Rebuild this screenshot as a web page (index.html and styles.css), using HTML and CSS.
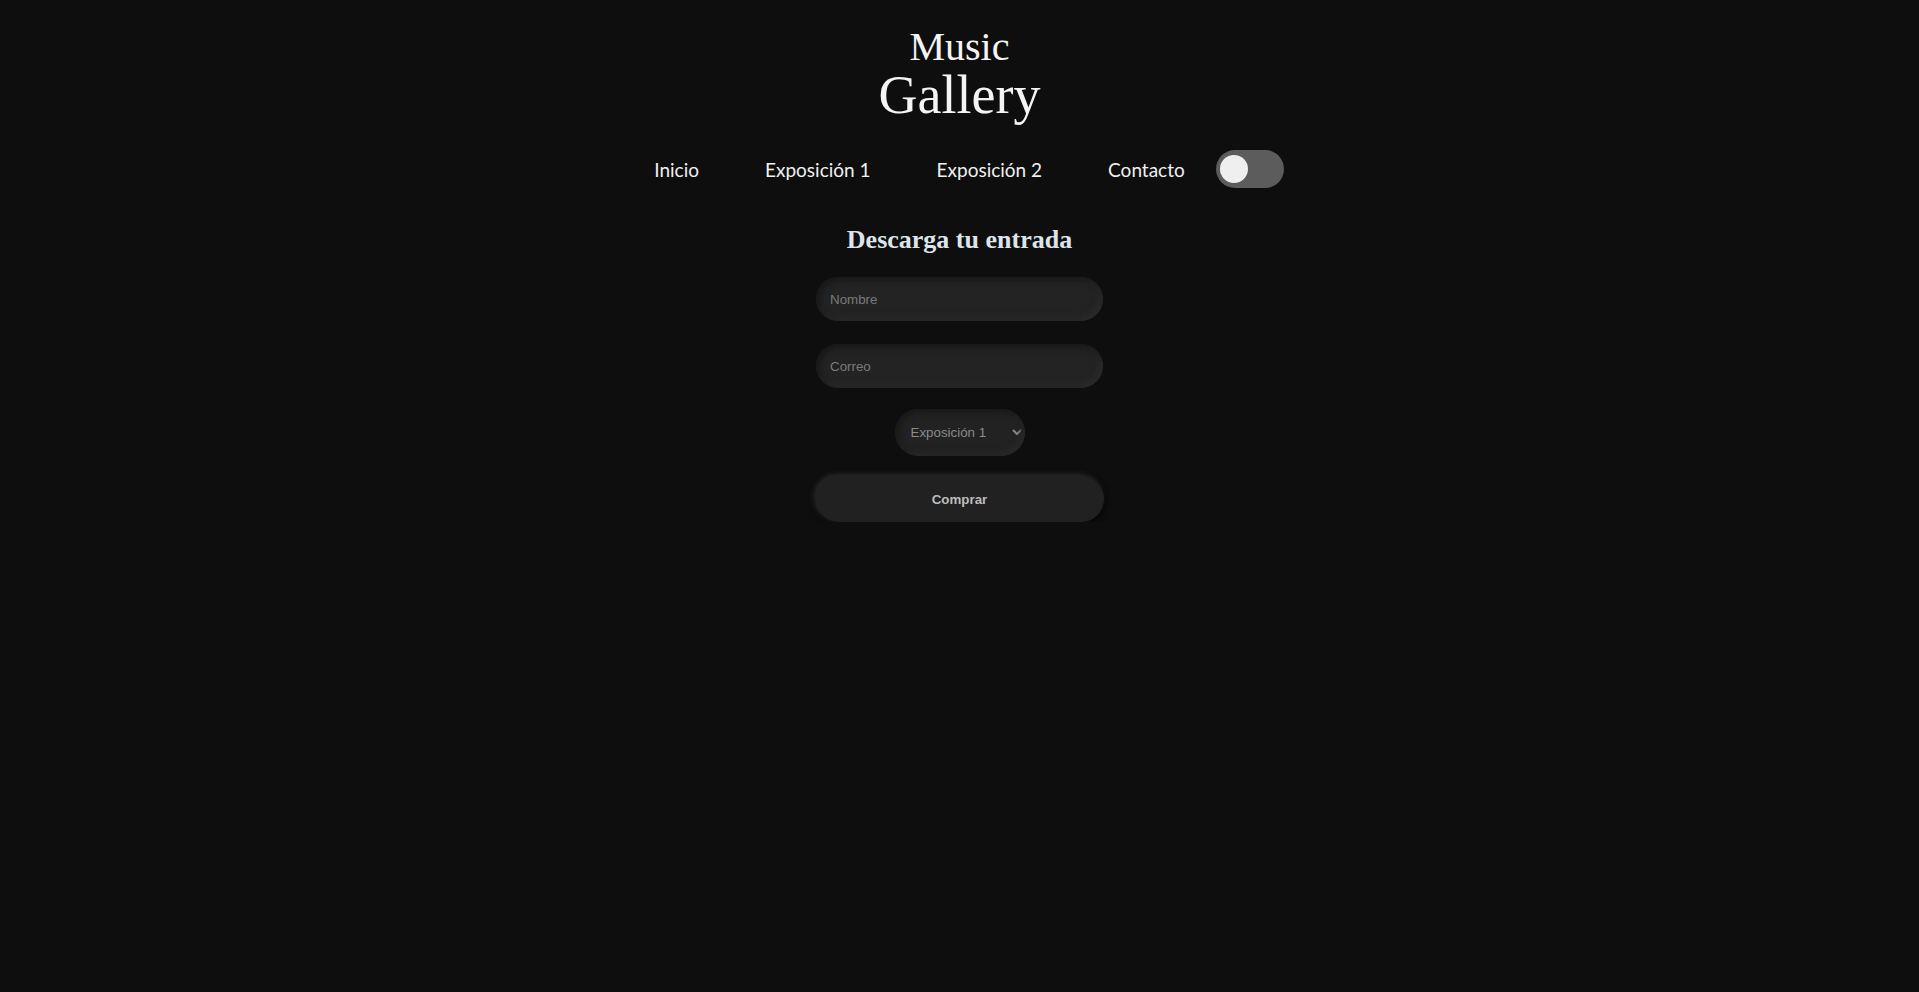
FILE: index.html
```html
<!DOCTYPE html>
<html lang="es">
<head>
<meta charset="utf-8">
<title>Music Gallery</title>
<link rel="stylesheet" href="styles.css">
</head>
<body>
<header class="header">
  <h1 class="logo"><span class="logo-top">Music</span><span class="logo-bottom">Gallery</span></h1>
  <nav class="nav">
    <a class="nav-link" href="#">Inicio</a>
    <a class="nav-link" href="#">Exposición 1</a>
    <a class="nav-link" href="#">Exposición 2</a>
    <a class="nav-link nav-link-last" href="#">Contacto</a>
    <span class="toggle"><span class="toggle-knob"></span></span>
  </nav>
</header>
<main class="main">
  <h2 class="form-title">Descarga tu entrada</h2>
  <form class="form">
    <input class="field" type="text" placeholder="Nombre">
    <input class="field" type="email" placeholder="Correo">
    <select class="select">
      <option>Exposición 1</option>
      <option>Exposición 2</option>
    </select>
    <button class="btn" type="button">Comprar</button>
  </form>
</main>
</body>
</html>
```
FILE: styles.css
```css
html, body {
  margin: 0;
  padding: 0;
  background: #0e0e0e;
  min-height: 100%;
}
body {
  font-family: "Liberation Serif", serif;
  color: #f2f2f2;
}
.header {
  display: flex;
  flex-direction: column;
  align-items: center;
  padding-top: 25px;
}
.logo {
  margin: 0;
  display: flex;
  flex-direction: column;
  align-items: center;
  font-weight: normal;
  font-family: "Liberation Serif", serif;
  color: #f4f4f4;
}
.logo-top {
  font-size: 40px;
  line-height: 44px;
}
.logo-bottom {
  font-size: 54px;
  line-height: 53px;
}
.nav {
  display: flex;
  align-items: center;
  margin-top: 28px;
  margin-right: 14px;
  font-family: "Lato", sans-serif;
  font-size: 19px;
}
.nav-link {
  color: #f0f0f0;
  text-decoration: none;
  padding: 0 33px;
}
.nav-link-last {
  padding-right: 31px;
}
.toggle {
  display: flex;
  align-items: center;
  width: 68px;
  height: 38px;
  border-radius: 19px;
  background: #5c5c5c;
  padding-left: 4px;
  box-sizing: border-box;
}
.toggle-knob {
  width: 28px;
  height: 28px;
  border-radius: 50%;
  background: #efefef;
}
.main {
  display: flex;
  flex-direction: column;
  align-items: center;
}
.form-title {
  margin: 36px 0 0;
  font-family: "Liberation Serif", serif;
  font-size: 26px;
  line-height: 32px;
  font-weight: bold;
  color: #dde4ec;
}
.form {
  display: flex;
  flex-direction: column;
  align-items: center;
  margin-top: 21px;
}
.field {
  width: 287px;
  height: 44px;
  box-sizing: border-box;
  border: none;
  outline: none;
  border-radius: 22px;
  background: #232323;
  padding: 0 14px;
  font-family: "Liberation Sans", Arial, sans-serif;
  font-size: 13.33px;
  color: #bbb;
  box-shadow: inset 3px 3px 6px #171717, inset -3px -3px 6px #2c2c2c;
  margin-bottom: 23px;
}
.field::placeholder {
  color: #7a7a7a;
}
.select {
  width: 130px;
  height: 47px;
  box-sizing: border-box;
  border: none;
  outline: none;
  border-radius: 24px;
  background: #222;
  color: #8a8a8a;
  font-family: "Liberation Sans", Arial, sans-serif;
  font-size: 13.33px;
  padding: 0 12px 0 12px;
  box-shadow: inset 3px 3px 6px #181818, inset -3px -3px 6px #2a2a2a;
  margin-top: -2px;
  margin-bottom: 20px;
}
.btn {
  width: 288px;
  height: 46px;
  border: none;
  border-radius: 23px;
  background: #212121;
  color: #bdbdbd;
  font-family: "Liberation Sans", Arial, sans-serif;
  font-size: 13.33px;
  font-weight: bold;
  box-shadow: -2px -2px 5px #2a2a2a, 2px 2px 5px #080808;
}
```
